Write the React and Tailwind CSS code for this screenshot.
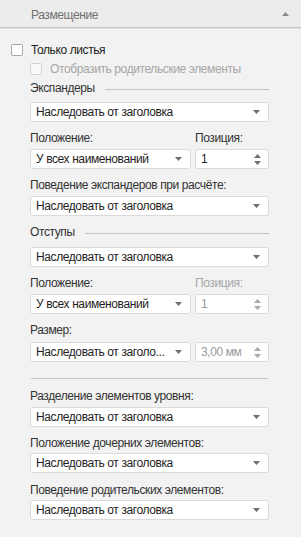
import React from "react";

const Arrow = () => (
  <svg width="7" height="4" viewBox="0 0 7 4" className="shrink-0">
    <path d="M0 0H7L3.5 4Z" fill="#6f6f6f" />
  </svg>
);

const Select = ({ text, className = "" }) => (
  <div className={`h-[20px] flex items-center justify-between bg-white border border-[#dadada] rounded-[3px] pl-[5px] pr-[8px] ${className}`}>
    <span className="text-[12px] leading-none text-[#1e1e1e] whitespace-nowrap">{text}</span>
    <Arrow />
  </div>
);

const Spin = ({ value, disabled }) => (
  <div className="h-[20px] w-[74px] flex items-center justify-between bg-white border border-[#dadada] rounded-[3px] pl-[5px] pr-[7px]">
    <span className={`text-[12px] leading-none ${disabled ? "text-[#9a9a9a]" : "text-[#1e1e1e]"}`}>{value}</span>
    <div className="flex flex-col gap-[3px]">
      <svg width="7" height="4" viewBox="0 0 7 4"><path d="M0 4H7L3.5 0Z" fill={disabled ? "#a8a8a8" : "#6f6f6f"} /></svg>
      <svg width="7" height="4" viewBox="0 0 7 4"><path d="M0 0H7L3.5 4Z" fill={disabled ? "#a8a8a8" : "#6f6f6f"} /></svg>
    </div>
  </div>
);

const Label = ({ children, className = "" }) => (
  <div className={`h-[16px] flex items-center text-[12px] leading-none text-[#333] ${className}`}>{children}</div>
);

const Section = ({ title, className = "" }) => (
  <div className={`h-[16px] flex items-center gap-[10px] ${className}`}>
    <span className="text-[12px] leading-none text-[#333]">{title}</span>
    <div className="flex-1 h-px bg-[#c4c4c4] mt-[2px]" />
  </div>
);

export default function App() {
  return (
    <div className="w-[301px] h-[537px] bg-[#f2f2f2] overflow-hidden tracking-[-0.4px]" style={{ fontFamily: '"Liberation Sans", Arial, sans-serif' }}>
      <div className="h-[28px] bg-[#ececec] flex items-center justify-between pl-[31px] pr-[12px] border-b border-[#c2c2c2]">
        <span className="text-[12px] leading-none text-[#707070] mt-[2px]">Размещение</span>
        <svg width="7" height="4" viewBox="0 0 7 4"><path d="M0 4H7L3.5 0Z" fill="#8a8a8a" /></svg>
      </div>
      <div className="h-px bg-[#dedede]" />
      <div className="pl-[11px] pt-[13px]">
        <div className="h-[16px] flex items-center gap-[8px]">
          <div className="w-[12px] h-[12px] rounded-[2px] border border-[#a9a9a9] bg-white" />
          <span className="text-[12px] leading-none text-[#222]">Только листья</span>
        </div>
        <div className="h-[16px] flex items-center gap-[8px] mt-[3px] pl-[19px]">
          <div className="w-[12px] h-[12px] rounded-[2px] border border-[#d2d2d2] bg-[#fafafa]" />
          <span className="text-[12px] leading-none text-[#a6a6a6]">Отобразить родительские элементы</span>
        </div>
      </div>
      <div className="pl-[30px] pr-[32px]">
        <Section title="Экспандеры" className="mt-[3px]" />
        <Select text="Наследовать от заголовка" className="mt-[6px]" />
        <div className="flex gap-[4px] mt-[8px]">
          <div className="flex-1">
            <Label>Положение:</Label>
            <Select text="У всех наименований" className="mt-[3px]" />
          </div>
          <div className="w-[74px]">
            <Label>Позиция:</Label>
            <div className="mt-[3px]"><Spin value="1" /></div>
          </div>
        </div>
        <Label className="mt-[8px]">Поведение экспандеров при расчёте:</Label>
        <Select text="Наследовать от заголовка" className="mt-[3px]" />
        <Section title="Отступы" className="mt-[8px]" />
        <Select text="Наследовать от заголовка" className="mt-[7px]" />
        <div className="flex gap-[4px] mt-[8px]">
          <div className="flex-1">
            <Label>Положение:</Label>
            <Select text="У всех наименований" className="mt-[3px]" />
          </div>
          <div className="w-[74px]">
            <Label className="text-[#a6a6a6]">Позиция:</Label>
            <div className="mt-[3px]"><Spin value="1" disabled /></div>
          </div>
        </div>
        <Label className="mt-[8px]">Размер:</Label>
        <div className="flex gap-[4px] mt-[4px]">
          <Select text="Наследовать от заголо..." className="flex-1" />
          <Spin value="3,00 мм" disabled />
        </div>
        <div className="h-px bg-[#c4c4c4] mt-[16px] ml-[1px] mr-[1px]" />
        <Label className="mt-[9px]">Разделение элементов уровня:</Label>
        <Select text="Наследовать от заголовка" className="mt-[3px]" />
        <Label className="mt-[8px]">Положение дочерних элементов:</Label>
        <Select text="Наследовать от заголовка" className="mt-[2px]" />
        <Label className="mt-[9px]">Поведение родительских элементов:</Label>
        <Select text="Наследовать от заголовка" className="mt-[2px]" />
      </div>
    </div>
  );
}
